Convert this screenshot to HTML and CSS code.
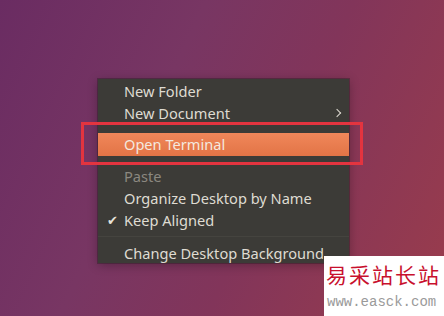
FILE: index.html
```html
<!DOCTYPE html>
<html lang="en">
<head>
  <meta charset="UTF-8" />
  <title>Desktop menu</title>
  <link rel="stylesheet" href="styles.css">
</head>
<body>
  <div class="desktop">
    <ul class="menu">
      <li class="item">New Folder</li>
      <li class="item sub">New Document</li>
      <li class="sep"></li>
      <li class="item active">Open Terminal</li>
      <li class="sep"></li>
      <li class="item disabled">Paste</li>
      <li class="item">Organize Desktop by Name</li>
      <li class="item checked">Keep Aligned</li>
      <li class="sep wide"></li>
      <li class="item">Change Desktop Background</li>
    </ul>
    <div class="mark"></div>
    <div class="stamp">
      <div class="stamp-cn">易采站长站</div>
      <div class="stamp-url">www.easck.com</div>
    </div>
  </div>
</body>
</html>
```
FILE: styles.css
```css
body {
  margin: 0;
}
.desktop {
  position: relative;
  width: 444px;
  height: 316px;
  overflow: hidden;
  background: linear-gradient(115deg, #6a2c62 0%, #783663 35%, #82355a 60%, #9a3c4c 100%);
  font-family: "Noto Sans", "DejaVu Sans", sans-serif;
}
.menu {
  position: absolute;
  left: 98px;
  top: 79px;
  width: 251px;
  height: 184px;
  margin: 0;
  padding: 1px 0 0;
  list-style: none;
  background: #3c3b37;
  box-shadow: 0 0 0 1px rgba(40, 30, 35, 0.4), 0 2px 10px rgba(0, 0, 0, 0.3);
  box-sizing: border-box;
  overflow: hidden;
}
.item {
  position: relative;
  height: 22px;
  line-height: 22px;
  padding-left: 26px;
  font-size: 14.6px;
  color: #dfdbd2;
  white-space: nowrap;
}
.item.active {
  height: 23px;
  line-height: 23px;
  color: #f4e8df;
  background: linear-gradient(180deg, #f0875a 0%, #e27446 100%);
}
.item.disabled {
  color: #8b8880;
}
.item.sub::after {
  content: "";
  position: absolute;
  right: 9px;
  top: 8px;
  width: 5px;
  height: 5px;
  border-top: 1.8px solid #dfdbd2;
  border-right: 1.8px solid #dfdbd2;
  transform: rotate(45deg);
}
.item.checked::before {
  content: "\2714";
  position: absolute;
  left: 9px;
  font-size: 13px;
  color: #e6e2da;
}
.sep {
  height: 9px;
}
.sep.wide {
  height: 11px;
  background: linear-gradient(#3c3b37 5px, #45443f 5px, #45443f 6px, #3c3b37 6px);
}
.mark {
  position: absolute;
  left: 81px;
  top: 122px;
  width: 276px;
  height: 37px;
  border: 3px solid #e3343f;
}
.stamp {
  position: absolute;
  left: 324px;
  top: 256px;
  width: 120px;
  height: 60px;
  background: #ffffff;
}
.stamp-cn {
  margin-top: 3px;
  padding-left: 2px;
  font-family: "Noto Sans CJK SC", serif;
  font-size: 21px;
  line-height: 30px;
  letter-spacing: 2px;
  color: #c8102e;
  white-space: nowrap;
}
.stamp-url {
  margin-top: 3px;
  padding-left: 3px;
  font-family: "Liberation Mono", monospace;
  font-size: 14px;
  line-height: 20px;
  color: #9a9a9a;
  white-space: nowrap;
}
```
